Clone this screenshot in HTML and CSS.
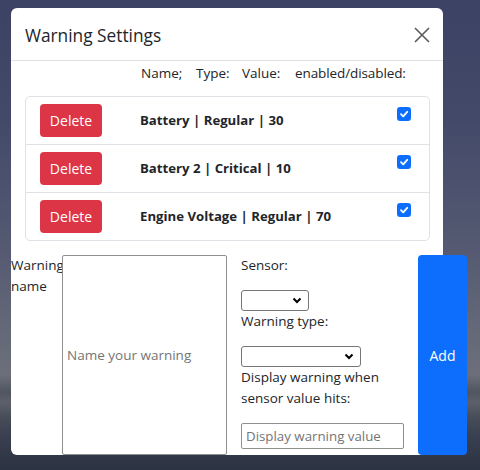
FILE: index.html
```html
<!DOCTYPE html>
<html>
<head>
<meta charset="utf-8">
<link rel="stylesheet" href="styles.css">
</head>
<body>
<div class="modal">
  <div class="modal-header">
    <h5 class="modal-title">Warning Settings</h5>
    <svg class="close" width="16" height="16" viewBox="0 0 16 16"><path d="M1 1L15 15M15 1L1 15" stroke="#5a5a5a" stroke-width="1.6" fill="none"/></svg>
  </div>
  <div class="cols-header">
    <span class="c-name">Name;</span><span class="c-type">Type:</span><span class="c-value">Value:</span><span class="c-en">enabled/disabled:</span>
  </div>
  <ul class="list">
    <li class="item"><button class="btn-del">Delete</button><span class="item-text">Battery | Regular | 30</span><span class="check"><svg width="10" height="10" viewBox="0 0 10 10"><path d="M2 5.2L4.2 7.3L8.2 2.8" stroke="#fff" stroke-width="1.8" fill="none" stroke-linecap="round" stroke-linejoin="round"/></svg></span></li>
    <li class="item"><button class="btn-del">Delete</button><span class="item-text">Battery 2 | Critical | 10</span><span class="check"><svg width="10" height="10" viewBox="0 0 10 10"><path d="M2 5.2L4.2 7.3L8.2 2.8" stroke="#fff" stroke-width="1.8" fill="none" stroke-linecap="round" stroke-linejoin="round"/></svg></span></li>
    <li class="item"><button class="btn-del">Delete</button><span class="item-text">Engine Voltage | Regular | 70</span><span class="check"><svg width="10" height="10" viewBox="0 0 10 10"><path d="M2 5.2L4.2 7.3L8.2 2.8" stroke="#fff" stroke-width="1.8" fill="none" stroke-linecap="round" stroke-linejoin="round"/></svg></span></li>
  </ul>
  <form class="add-form">
    <label class="name-label">Warning name</label>
    <input class="name-input" type="text" placeholder="Name your warning">
    <div class="fields">
      <label class="f-label">Sensor:</label>
      <select class="sel sel-sensor"></select>
      <label class="f-label">Warning type:</label>
      <select class="sel sel-type"></select>
      <label class="f-label">Display warning when sensor value hits:</label>
      <input class="val-input" type="text" placeholder="Display warning value">
    </div>
    <button type="button" class="btn-add">Add</button>
  </form>
</div>
</body>
</html>
```
FILE: styles.css
```css
* { box-sizing: border-box; }
html, body { margin: 0; padding: 0; }
body {
  width: 480px;
  height: 470px;
  overflow: hidden;
  font-family: "Open Sans", "Noto Sans", sans-serif;
  font-size: 13.5px;
  line-height: 21px;
  color: #212529;
  background: linear-gradient(to bottom,
    #3b4263 0px, #434a69 120px, #555a72 250px, #666a78 340px, #6c6f7a 375px,
    #50555f 392px, #5d6069 402px, #474c58 418px, #3a4050 435px, #2b3242 470px);
  padding-top: 8px;
  padding-left: 11px;
}
.modal {
  width: 432px;
  height: 447px;
  background: #fff;
  border-radius: 6px;
}
.modal-header {
  height: 53px;
  display: flex;
  align-items: center;
  justify-content: space-between;
  padding: 0 13px 0 14px;
  border-bottom: 1px solid #dee2e6;
}
.modal-title {
  margin: 3px 0 0 0;
  font-size: 17.3px;
  font-weight: 500;
  line-height: 26px;
}
.close { display: block; margin-top: 1px; }
.cols-header {
  padding: 2px 0 0 130px;
  height: 35px;
  white-space: nowrap;
}
.cols-header span { display: inline-block; }
.c-name { width: 55px; }
.c-type { width: 46px; }
.c-value { width: 53px; }
.c-en { letter-spacing: -0.1px; }
.list {
  list-style: none;
  margin: 0 13px 0 14px;
  padding: 0;
  border: 1px solid #dee2e6;
  border-radius: 5px;
}
.item {
  display: flex;
  align-items: flex-start;
  padding: 7px 18px 7px 14px;
  border-top: 1px solid #dee2e6;
}
.item:first-child { border-top: 0; }
.btn-del {
  width: 62px;
  height: 33px;
  background: #dc3545;
  color: #fff;
  border: 0;
  border-radius: 4px;
  font-family: inherit;
  font-size: 14px;
  padding: 0;
}
.item-text {
  font-weight: 700;
  font-size: 13.2px;
  margin-left: 38px;
  line-height: 26px;
  padding-top: 3px;
  flex: 1;
}
.check {
  width: 14px;
  height: 14px;
  margin-top: 3px;
  background: #0d6efd;
  border-radius: 3px;
  display: flex;
  align-items: center;
  justify-content: center;
}
.check svg { display: block; }
.add-form {
  display: flex;
  margin-top: 14px;
  height: 200px;
}
.name-label {
  width: 51px;
  flex: none;
  white-space: normal;
  word-break: keep-all;
}
.name-input {
  width: 165px;
  height: 200px;
  flex: none;
  border: 1px solid #8f8f8f;
  border-radius: 2px;
  padding: 0 4px;
  font-family: inherit;
  font-size: 13.5px;
  color: #212529;
}
.name-input::placeholder, .val-input::placeholder { color: #757575; opacity: 1; }
.fields {
  width: 163px;
  margin-left: 14px;
  display: flex;
  flex-direction: column;
  align-items: flex-start;
  flex: none;
}
.f-label { display: block; }
.sel {
  appearance: none;
  -webkit-appearance: none;
  height: 21px;
  margin-top: 14px;
  border: 1px solid #767676;
  border-radius: 3px;
  background: #fff url("data:image/svg+xml;utf8,<svg xmlns='http://www.w3.org/2000/svg' width='10' height='7' viewBox='0 0 10 7'><path d='M1.5 1.5L5 5L8.5 1.5' stroke='black' stroke-width='2' fill='none'/></svg>") no-repeat right 6px center;
}
.sel-sensor { width: 68px; }
.sel-type { width: 120px; }
.val-input {
  width: 163px;
  height: 26px;
  margin-top: 14px;
  border: 1px solid #8f8f8f;
  border-radius: 2px;
  padding: 0 4px;
  font-family: inherit;
  font-size: 13.3px;
}
.btn-add {
  width: 49px;
  height: 200px;
  margin-left: 14px;
  flex: none;
  background: #0d6efd;
  color: #fff;
  border: 0;
  border-radius: 4px;
  font-family: inherit;
  font-size: 14px;
  padding: 0;
}
```
